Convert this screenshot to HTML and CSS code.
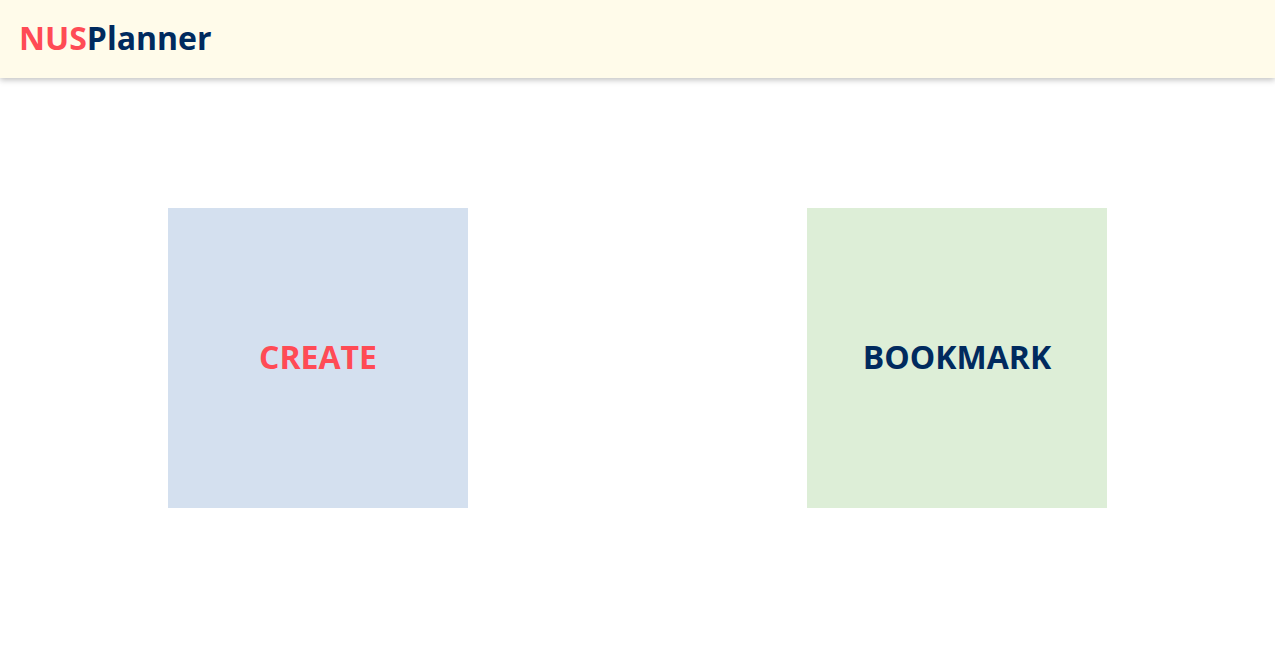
FILE: index.html
```html
<!DOCTYPE html>
<html>
<head>
<meta charset="utf-8">
<link rel="stylesheet" href="styles.css">
</head>
<body>
<header class="topbar">
  <div class="logo"><span class="logo-nus">NUS</span><span class="logo-planner">Planner</span></div>
</header>
<main class="choices">
  <div class="card card-create"><span>CREATE</span></div>
  <div class="card card-bookmark"><span>BOOKMARK</span></div>
</main>
</body>
</html>
```
FILE: styles.css
```css
html, body {
  margin: 0;
  padding: 0;
  background: #ffffff;
  font-family: "Open Sans", "Noto Sans", sans-serif;
}
.topbar {
  height: 78px;
  box-sizing: border-box;
  background: #fffbea;
  box-shadow: 0 2px 6px rgba(0, 0, 0, 0.25);
  display: flex;
  align-items: center;
  padding: 0 0 4px 19px;
  position: relative;
}
.logo {
  font-size: 32px;
  font-weight: 700;
}
.logo-nus { color: #ff4b55; }
.logo-planner { color: #002a5e; }
.choices {
  display: flex;
  justify-content: space-between;
  padding: 130px 168px 0;
}
.card {
  width: 300px;
  height: 300px;
  box-sizing: border-box;
  padding-bottom: 4px;
  display: flex;
  align-items: center;
  justify-content: center;
  font-size: 32px;
  font-weight: 700;
}
.card-create {
  background: #d4e0ef;
  color: #ff4b55;
}
.card-bookmark {
  background: #ddeed7;
  color: #002a5e;
}
```
